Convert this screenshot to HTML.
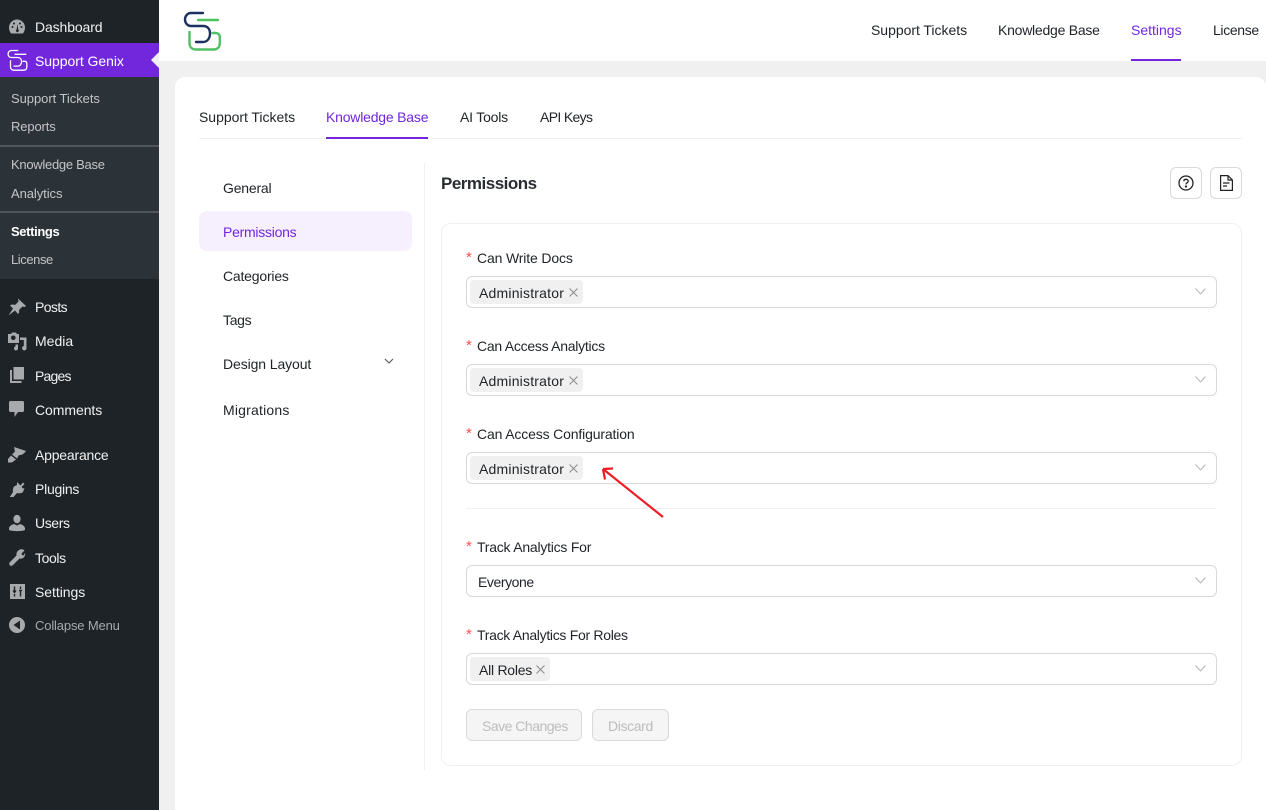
<!DOCTYPE html>
<html lang="en">
<head>
<meta charset="utf-8">
<title>Support Genix Settings</title>
<style>
html,body{margin:0;padding:0;width:1266px;height:810px;overflow:hidden;background:#f0f0f1;font-family:"Liberation Sans",sans-serif;color:#1f2328}
.a{position:absolute}
.t{position:absolute;white-space:nowrap;line-height:20px;font-size:14px;letter-spacing:-.2px;color:#1f2328}
.side{left:0;top:0;width:159px;height:810px;background:#1d2327}
.w{color:#f0f0f1}
.s{color:#c3c4c7;font-size:13px;letter-spacing:-.05px}
.p{color:#7227dd}
.sel{position:absolute;left:466px;width:749px;height:30px;border:1px solid #d9d9d9;border-radius:6px;background:#fff}
.tag{position:absolute;left:470px;height:24px;background:#f0f0f0;border-radius:4px}
.req{position:absolute;color:#ff4d4f;font-size:15px;line-height:20px;left:466px}
.btn{position:absolute;top:709px;height:30px;background:#f5f5f5;border:1px solid #d9d9d9;border-radius:6px}
.ib{position:absolute;top:167px;width:30px;height:30px;border:1px solid #d9d9d9;border-radius:6px;background:#fff}
svg{position:absolute;overflow:visible}
</style>
</head>
<body>
<!-- top header -->
<div class="a" style="left:159px;top:0;width:1107px;height:61px;background:#fff"></div>
<div class="a" style="left:159px;top:61px;width:1107px;height:749px;background:#f0f0f1"></div>
<div class="a" style="left:175px;top:77px;width:1091px;height:733px;background:#fff;border-radius:10px 10px 0 0"></div>

<!-- logo -->
<svg style="left:184px;top:12px" width="37" height="39" viewBox="184 12 37 39" fill="none" stroke-linecap="round">
<path d="M198 20H218" stroke="#4fc063" stroke-width="2.400"/>
<path d="M189.500 32V43C189.500 47 192 49.500 196 49.500H213.500C217.500 49.500 219.800 47 219.800 43V37C219.800 34.500 218 33 215.500 33H212.500" stroke="#4fc063" stroke-width="2.400"/>
<path d="M203 13H191C187.500 13 185 16 185 19.500S187.500 26 191 26H203C207.500 26 210 29 210 33.500S207.500 42 203 42H196" stroke="#1d3160" stroke-width="2.400"/>
</svg>

<div class="t" style="left:871px;top:20px;letter-spacing:-.03px">Support Tickets</div>
<div class="t" style="left:998px;top:20px;letter-spacing:-.24px">Knowledge Base</div>
<div class="t p" style="left:1131px;top:20px;letter-spacing:0">Settings</div>
<div class="t" style="left:1213px;top:20px;letter-spacing:-.35px">License</div>
<div class="a" style="left:1131px;top:59px;width:50px;height:2px;background:#7227dd"></div>

<!-- tabs -->
<div class="t" style="left:199px;top:107px;letter-spacing:-.03px">Support Tickets</div>
<div class="t p" style="left:326px;top:107px;letter-spacing:-.2px">Knowledge Base</div>
<div class="t" style="left:460px;top:107px;letter-spacing:-.2px">AI Tools</div>
<div class="t" style="left:540px;top:107px;letter-spacing:-.65px">API Keys</div>
<div class="a" style="left:199px;top:138px;width:1043px;height:1px;background:#f0f0f0"></div>
<div class="a" style="left:326px;top:137px;width:102px;height:2px;background:#7227dd"></div>

<!-- left nav -->
<div class="a" style="left:424px;top:163px;width:1px;height:607px;background:#f0f0f0"></div>
<div class="a" style="left:199px;top:211px;width:213px;height:40px;background:#f6effe;border-radius:8px"></div>
<div class="t" style="left:223px;top:178px">General</div>
<div class="t p" style="left:223px;top:222px;letter-spacing:-.26px">Permissions</div>
<div class="t" style="left:223px;top:266px">Categories</div>
<div class="t" style="left:223px;top:310px;letter-spacing:-.3px">Tags</div>
<div class="t" style="left:223px;top:354px;letter-spacing:-.1px">Design Layout</div>
<div class="t" style="left:223px;top:400px;letter-spacing:.2px">Migrations</div>
<svg style="left:384px;top:358px" width="10" height="7" viewBox="0 0 10 7" fill="none"><path d="M1 1L5 5L9 1" stroke="#555" stroke-width="1.100"/></svg>

<!-- heading -->
<div class="t" style="left:441px;top:174px;font-size:17px;font-weight:700;letter-spacing:-.5px;color:#2a2d31">Permissions</div>
<div class="ib" style="left:1170px"></div>
<div class="ib" style="left:1210px"></div>
<svg style="left:1178px;top:175px" width="16" height="16" viewBox="0 0 16 16" fill="none" stroke="#222" stroke-width="1.300"><circle cx="8" cy="8" r="7"/><path d="M5.800 6.300C5.800 5 6.800 4.300 8 4.300S10.200 5.100 10.200 6.200C10.200 7.700 8 7.800 8 9.400"/><circle cx="8" cy="11.500" r=".5" fill="#222"/></svg>
<svg style="left:1220px;top:175px" width="13" height="16" viewBox="0 0 13 16" fill="none" stroke="#222" stroke-width="1.200"><path d="M.6 .6H8L12.400 5V15.400H.6Z"/><path d="M8 .6V5H12.400"/><path d="M3 8H9.500M3 11H7"/></svg>

<!-- card -->
<div class="a" style="left:441px;top:223px;width:799px;height:541px;border:1px solid #f0f0f0;border-radius:10px;background:#fff"></div>

<div class="req" style="top:248px">*</div><div class="t" style="left:477px;top:248px;letter-spacing:-.15px">Can Write Docs</div>
<div class="sel" style="top:276px"></div><div class="tag" style="top:280px;width:113px"></div>
<div class="t" style="left:479px;top:283px;letter-spacing:.2px">Administrator</div>

<div class="req" style="top:336px">*</div><div class="t" style="left:477px;top:336px;letter-spacing:-.26px">Can Access Analytics</div>
<div class="sel" style="top:364px"></div><div class="tag" style="top:368px;width:113px"></div>
<div class="t" style="left:479px;top:371px;letter-spacing:.2px">Administrator</div>

<div class="req" style="top:424px">*</div><div class="t" style="left:477px;top:424px;letter-spacing:-.15px">Can Access Configuration</div>
<div class="sel" style="top:452px"></div><div class="tag" style="top:456px;width:113px"></div>
<div class="t" style="left:479px;top:459px;letter-spacing:.2px">Administrator</div>

<div class="a" style="left:466px;top:508px;width:750px;height:1px;background:#f0f0f0"></div>

<div class="req" style="top:537px">*</div><div class="t" style="left:477px;top:537px;letter-spacing:-.23px">Track Analytics For</div>
<div class="sel" style="top:565px"></div>
<div class="t" style="left:478px;top:572px;letter-spacing:-.42px">Everyone</div>

<div class="req" style="top:625px">*</div><div class="t" style="left:477px;top:625px;letter-spacing:-.3px">Track Analytics For Roles</div>
<div class="sel" style="top:653px"></div><div class="tag" style="top:657px;width:80px"></div>
<div class="t" style="left:479px;top:660px;letter-spacing:-.25px">All Roles</div>

<!-- x icons -->
<svg style="left:569px;top:288px" width="9" height="9" viewBox="0 0 9 9" stroke="#8a8a8a" stroke-width="1"><path d="M.5 .5L8.500 8.500M8.500 .5L.5 8.500"/></svg>
<svg style="left:569px;top:376px" width="9" height="9" viewBox="0 0 9 9" stroke="#8a8a8a" stroke-width="1"><path d="M.5 .5L8.500 8.500M8.500 .5L.5 8.500"/></svg>
<svg style="left:569px;top:464px" width="9" height="9" viewBox="0 0 9 9" stroke="#8a8a8a" stroke-width="1"><path d="M.5 .5L8.500 8.500M8.500 .5L.5 8.500"/></svg>
<svg style="left:536px;top:665px" width="9" height="9" viewBox="0 0 9 9" stroke="#8a8a8a" stroke-width="1"><path d="M.5 .5L8.500 8.500M8.500 .5L.5 8.500"/></svg>

<!-- chevrons -->
<svg style="left:1195px;top:288px" width="11" height="7" viewBox="0 0 11 7" fill="none" stroke="#b5b5b5"><path d="M.5 .5L5.500 6L10.500 .5"/></svg>
<svg style="left:1195px;top:376px" width="11" height="7" viewBox="0 0 11 7" fill="none" stroke="#b5b5b5"><path d="M.5 .5L5.500 6L10.500 .5"/></svg>
<svg style="left:1195px;top:464px" width="11" height="7" viewBox="0 0 11 7" fill="none" stroke="#b5b5b5"><path d="M.5 .5L5.500 6L10.500 .5"/></svg>
<svg style="left:1195px;top:577px" width="11" height="7" viewBox="0 0 11 7" fill="none" stroke="#b5b5b5"><path d="M.5 .5L5.500 6L10.500 .5"/></svg>
<svg style="left:1195px;top:665px" width="11" height="7" viewBox="0 0 11 7" fill="none" stroke="#b5b5b5"><path d="M.5 .5L5.500 6L10.500 .5"/></svg>

<!-- arrow -->
<svg style="left:600px;top:465px" width="66" height="55" viewBox="0 0 66 55" fill="none" stroke="#f01c24" stroke-width="2.200"><path d="M63 52L3 4"/><path d="M3 4L13 3.500M3 4L5 14.500"/></svg>

<!-- buttons -->
<div class="btn" style="left:466px;width:114px"></div>
<div class="btn" style="left:592px;width:75px"></div>
<div class="t" style="left:482px;top:716px;color:#bdbdbd;letter-spacing:-.5px">Save Changes</div>
<div class="t" style="left:608px;top:716px;color:#bdbdbd;letter-spacing:-.37px">Discard</div>

<!-- wp sidebar -->
<div class="a side"></div>
<div class="a" style="left:0;top:43px;width:159px;height:34px;background:#7227dd"></div>
<div class="a" style="left:151px;top:52px;width:0;height:0;border:8px solid transparent;border-right-color:#f0f0f1;border-left:0"></div>
<div class="a" style="left:0;top:77px;width:159px;height:202px;background:#2c3338"></div>
<div class="a" style="left:0;top:145px;width:159px;height:2px;background:#50565b"></div>
<div class="a" style="left:0;top:211px;width:159px;height:2px;background:#50565b"></div>

<div class="t w" style="left:35px;top:17px;letter-spacing:-.12px">Dashboard</div>
<div class="t" style="left:35px;top:51px;color:#fff;letter-spacing:-.05px">Support Genix</div>
<div class="t s" style="left:11px;top:89px">Support Tickets</div>
<div class="t s" style="left:11px;top:117px;letter-spacing:-.13px">Reports</div>
<div class="t s" style="left:11px;top:155px;letter-spacing:-.28px">Knowledge Base</div>
<div class="t s" style="left:11px;top:184px;letter-spacing:-.07px">Analytics</div>
<div class="t s" style="left:11px;top:222px;color:#fff;font-weight:700;letter-spacing:-.37px">Settings</div>
<div class="t s" style="left:11px;top:250px;letter-spacing:-.42px">License</div>
<div class="t w" style="left:35px;top:297px;letter-spacing:-.6px">Posts</div>
<div class="t w" style="left:35px;top:331px;letter-spacing:0">Media</div>
<div class="t w" style="left:35px;top:366px;letter-spacing:-.8px">Pages</div>
<div class="t w" style="left:35px;top:400px;letter-spacing:-.06px">Comments</div>
<div class="t w" style="left:35px;top:445px">Appearance</div>
<div class="t w" style="left:35px;top:479px;letter-spacing:-.25px">Plugins</div>
<div class="t w" style="left:35px;top:513px;letter-spacing:-.4px">Users</div>
<div class="t w" style="left:35px;top:548px;letter-spacing:-.4px">Tools</div>
<div class="t w" style="left:35px;top:582px;letter-spacing:-.05px">Settings</div>
<div class="t" style="left:35px;top:616px;font-size:13px;letter-spacing:-.15px;color:#a7aaad">Collapse Menu</div>

<!-- wp icons -->
<svg style="left:9px;top:19px" width="16" height="16" viewBox="0 0 16 16"><path d="M8 0.500C3.600 0.500 0 4 0 8.500C0 10.800 .8 12.800 2 14.500H14C15.200 12.800 16 10.800 16 8.500C16 4 12.400 .5 8 .5Z" fill="#a7aaad"/><path d="M8.500 5L7.600 10.500A1.400 1.400 0 1 0 9.200 10.500Z" fill="#1d2327"/><circle cx="3.500" cy="8" r="1" fill="#1d2327"/><circle cx="12.500" cy="8" r="1" fill="#1d2327"/><circle cx="5" cy="4.500" r="1" fill="#1d2327"/><circle cx="11" cy="4.500" r="1" fill="#1d2327"/></svg>
<svg style="left:7px;top:50px" width="21" height="21" viewBox="184 12 37 39" fill="none" stroke="#fff" stroke-width="2.400" stroke-linecap="round"><path d="M203 13H191C187.500 13 185 16 185 19.500S187.500 26 191 26H203C207.500 26 210 29 210 33.500S207.500 42 203 42H196"/><path d="M198 20H218"/><path d="M189.500 32V43C189.500 47 192 49.500 196 49.500H213.500C217.500 49.500 219.800 47 219.800 43V37C219.800 34.500 218 33 215.500 33H212.500"/></svg>
<svg style="left:0;top:0" width="34" height="640" viewBox="0 0 34 640" fill="#a7aaad">
<path d="M18 298.500L26 306L24.500 307L22.500 306.500L19 310C19.500 312 19 313 18 314L15 310.500L8.500 315.500L13 308.500L10 305.500C11 304.500 13 304 15 305L18.500 301.500Z"/>
<path d="M8 334H11L12 332.500H16L17 334H19V343H8Z"/><circle cx="13.300" cy="337.800" r="2.300" fill="#1d2327"/>
<path d="M20 337.500H26.500V348A2.200 2.200 0 1 1 23.800 346V340H20Z"/><path d="M15.500 344.500H18V348.500A2 2 0 1 1 15.500 346.500Z"/>
<path d="M13.500 367H24V379.500H13.500Z"/><path d="M10 370H12V381H21.500V383H10Z"/>
<path d="M10.500 401H22.500A1.500 1.500 0 0 1 24 402.500V410.500A1.500 1.500 0 0 1 22.500 412H18L14.500 417V412H10.500A1.500 1.500 0 0 1 9 410.500V402.500A1.500 1.500 0 0 1 10.500 401Z"/>
<path d="M14 447L26 451C24 454 21 455.500 19 455L17 458.500L12 454.500L15 451.500Z"/><path d="M11 455.500L16 459.500L12 462.500H8L8 459Z"/>
<path d="M17 482L20.500 485.500L23 482.500L24.500 484L21.500 487L23 488.500L24.500 488L23 492C21.500 493.500 19 493.500 17 493L13.500 497H9.800L13 492C12.500 490 13 488 14 486.500L17 485Z"/>
<ellipse cx="17" cy="519" rx="3.600" ry="4.300"/><path d="M9 528.500C9 526 12 524.500 14 524L17 525.500L20 524C22 524.500 25 526 25 528.500V530C22 531.500 12 531.500 9 530Z"/>
<path d="M20 549.500C22 549 23.500 549.500 24.500 550.500L21.500 553.500L22 555L23.500 555.500L25 553C25.500 555 24.500 557 23 558C21.800 558.800 20.500 558.800 19.500 558.500L13 565C12 566 10.500 566 9.800 565.200C9 564.500 9 563 10 562L16.500 555.500C16 553 17.500 550.500 20 549.500Z"/>
<path d="M10 584H25V599H10Z"/>
<circle cx="17" cy="625" r="8"/>
</svg>
<svg style="left:10px;top:584px" width="15" height="15" viewBox="0 0 15 15"><path d="M4.500 2.500V8M3 6.500L4.500 8.500L6 6.500M4.500 10V12.500M10.500 2.500V5M9 6.500H12M10.500 6.500V12.500" stroke="#1d2327" stroke-width="1.400" fill="none"/></svg>
<svg style="left:9px;top:617px" width="16" height="16" viewBox="0 0 16 16"><path d="M11 3.500V12.500L4.500 8Z" fill="#1d2327"/></svg>
</body>
</html>
